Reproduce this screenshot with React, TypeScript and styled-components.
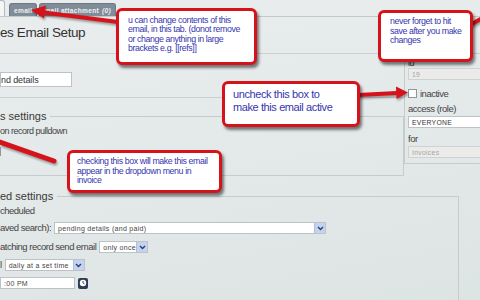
import { FC, ReactNode } from 'react';
import styled, { createGlobalStyle } from 'styled-components';

const RED = '#d6131b';
const INK = '#3636ae';

const GlobalStyle = createGlobalStyle`
  html, body {
    margin: 0;
    padding: 0;
  }
  body {
    background: #e4e9e9;
    font-family: "Liberation Sans", Arial, sans-serif;
  }
`;

const Page = styled.div`
  position: relative;
  width: 480px;
  height: 300px;
  overflow: hidden;
  background: linear-gradient(170deg, #e9eded 0%, #e3e8e8 55%, #dde4e4 100%);
  color: #3d3d3d;
  font-family: "Liberation Sans", Arial, sans-serif;
`;

const TabBar = styled.div`
  display: flex;
  align-items: flex-end;
  height: 16px;
  border-bottom: 1px solid #c3c9c9;
`;

const ActiveTabEdge = styled.div`
  width: 5px;
  height: 16px;
  margin-right: 4px;
  box-sizing: border-box;
  background: #f4f6f6;
  border-right: 1px solid #b3bac0;
  border-top: 1px solid #b3bac0;
  border-radius: 0 3px 0 0;
`;

const Tab = styled.div`
  display: flex;
  align-items: center;
  height: 13px;
  padding: 0 4px;
  margin-right: 2px;
  box-sizing: border-box;
  border-radius: 3px 3px 0 0;
  background: #808c98;
  border: 1px solid #6e7984;
  border-bottom: none;
  color: #eef1f4;
  font-size: 6.6px;
  font-weight: bold;
  letter-spacing: 0.3px;

  em {
    margin-left: 3px;
  }
`;

const Title = styled.h1`
  margin: 7px 0 0;
  font-size: 13.5px;
  font-weight: normal;
  line-height: 18px;
  letter-spacing: -0.4px;
  color: #333;
`;

const Rule = styled.div<{ $mt: number }>`
  margin-top: ${({ $mt }) => $mt}px;
  border-top: 1px solid #cbd0d0;
`;

const Split = styled.div`
  display: grid;
  grid-template-columns: 404px 76px;
`;

const LeftCol = styled.div`
  display: flex;
  flex-direction: column;
`;

const TextInput = styled.div<{ $w: number; $h?: number; $mt?: number }>`
  display: flex;
  align-items: center;
  width: ${({ $w }) => $w}px;
  height: ${({ $h }) => $h ?? 12}px;
  margin-top: ${({ $mt }) => $mt ?? 0}px;
  padding-left: 3px;
  box-sizing: border-box;
  background: #fff;
  border: 1px solid #bcc2c6;
  color: #444;
  font-size: 7px;
  letter-spacing: 0.3px;
  white-space: nowrap;
`;

const DetailInput = styled(TextInput)`
  padding-left: 0;
  font-size: 9px;
  letter-spacing: -0.1px;
  color: #333;
`;

const Box = styled.fieldset<{ $mt: number; $h: number; $w?: number }>`
  margin: ${({ $mt }) => $mt}px 0 0;
  padding: 0;
  width: ${({ $w }) => ($w ? `${$w}px` : 'auto')};
  height: ${({ $h }) => $h}px;
  box-sizing: border-box;
  border: 1px solid #c6cccc;
  border-left: none;
  min-width: 0;
`;

const Legend = styled.legend`
  padding: 0 4px 0 0;
  font-size: 11px;
  line-height: 12px;
  letter-spacing: 0;
  color: #3a3a3a;
`;

const Label = styled.div<{ $mt?: number; $size?: number }>`
  margin-top: ${({ $mt }) => $mt ?? 0}px;
  font-size: ${({ $size }) => $size ?? 9.5}px;
  line-height: 10px;
  letter-spacing: -0.5px;
  color: #444;
  white-space: nowrap;
`;

const Check = styled.div<{ $ml?: number }>`
  width: 9px;
  height: 9px;
  margin-left: ${({ $ml }) => $ml ?? 0}px;
  box-sizing: border-box;
  flex: none;
  background: #fff;
  border: 1px solid #8e979e;
`;

const FormRow = styled.div<{ $mt: number }>`
  display: flex;
  align-items: center;
  gap: 3px;
  margin-top: ${({ $mt }) => $mt}px;
  height: 12px;
`;

const SelectBox = styled(TextInput)`
  justify-content: space-between;
  padding-right: 0;
`;

const ArrowKey = styled.div`
  display: flex;
  align-items: center;
  justify-content: center;
  width: 10px;
  height: 10px;
  background: #c6d3ee;
  border-left: 1px solid #aebde0;
`;

const ClockKey = styled.div`
  display: flex;
  align-items: center;
  justify-content: center;
  width: 10px;
  height: 11px;
  border-radius: 2px;
  background: #2d3b55;
`;

const SidePanel = styled.div`
  display: flex;
  flex-direction: column;
  margin-top: 4px;
  padding: 0 0 5px 3px;
  align-self: start;
  border-left: 1px solid #c6cccc;
  border-bottom: 1px solid #c6cccc;
`;

const SideInput = styled(TextInput)<{ $off?: boolean }>`
  width: 80px;
  font-size: 6.8px;
  background: ${({ $off }) => ($off ? '#ebebea' : '#fff')};
  color: ${({ $off }) => ($off ? '#a5a5a5' : '#333')};
  border-color: ${({ $off }) => ($off ? '#cfd2d2' : '#bcc2c6')};
`;

const CheckRow = styled.div`
  display: flex;
  align-items: center;
  gap: 3px;
  margin-top: 8px;
  height: 11px;
`;

const Callout = styled.div<{ $x: number; $y: number; $w: number; $h: number; $pad: string; $size: number; $lh: number }>`
  position: absolute;
  left: ${({ $x }) => $x}px;
  top: ${({ $y }) => $y}px;
  width: ${({ $w }) => $w}px;
  height: ${({ $h }) => $h}px;
  padding: ${({ $pad }) => $pad};
  box-sizing: border-box;
  background: #fff;
  border: 3px solid ${RED};
  border-radius: 6px;
  box-shadow: 2px 3px 3px rgba(0, 0, 0, 0.5);
  color: ${INK};
  font-size: ${({ $size }) => $size}px;
  line-height: ${({ $lh }) => $lh}px;
  letter-spacing: -0.4px;
  white-space: nowrap;
`;

const Arrows = styled.svg`
  position: absolute;
  left: 0;
  top: 0;
  pointer-events: none;
  filter: drop-shadow(1px 2px 1px rgba(0, 0, 0, 0.35));
`;

const Chevron = () => (
  <svg width="7" height="5" viewBox="0 0 7 5">
    <path d="M1 1 L3.5 3.6 L6 1" fill="none" stroke="#28407a" strokeWidth="1.4" />
  </svg>
);

const Select: FC<{ w: number; children: ReactNode }> = ({ w, children }) => (
  <SelectBox $w={w}>
    {children}
    <ArrowKey>
      <Chevron />
    </ArrowKey>
  </SelectBox>
);

const App = () => (
  <Page>
    <GlobalStyle />
    <TabBar>
      <ActiveTabEdge />
      <Tab>email</Tab>
      <Tab>
        mail attachment<em>(0)</em>
      </Tab>
    </TabBar>
    <Title>es Email Setup</Title>
    <Rule $mt={11} />

    <Split>
      <LeftCol>
        <DetailInput $w={72} $h={15} $mt={18}>
          nd details
        </DetailInput>
        <Rule $mt={10} />
        <Box $mt={12} $h={66}>
          <Legend>s settings</Legend>
          <Label $mt={4} $size={9}>
            on record pulldown
          </Label>
          <FormRow $mt={9}>
            <Check $ml={-8} />
          </FormRow>
        </Box>
      </LeftCol>

      <SidePanel>
        <Label $size={9}>id</Label>
        <SideInput $off $mt={0}>
          19
        </SideInput>
        <CheckRow>
          <Check />
          <Label>inactive</Label>
        </CheckRow>
        <Label $mt={5}>access (role)</Label>
        <SideInput $mt={2}>EVERYONE</SideInput>
        <Label $mt={6}>for</Label>
        <SideInput $off $mt={2}>
          Invoices
        </SideInput>
      </SidePanel>
    </Split>

    <Box $mt={14} $h={120} $w={459}>
      <Legend>ed settings</Legend>
      <Label $mt={4}>cheduled</Label>
      <FormRow $mt={6}>
        <Label>aved search):</Label>
        <Select w={272}>pending details (and paid)</Select>
      </FormRow>
      <FormRow $mt={7}>
        <Label>atching record send email</Label>
        <Select w={49}>only once</Select>
      </FormRow>
      <FormRow $mt={6}>
        <Label>l</Label>
        <Select w={80}>daily at a set time</Select>
      </FormRow>
      <FormRow $mt={6}>
        <TextInput $w={75}>:00 PM</TextInput>
        <ClockKey>
          <svg width="8" height="8" viewBox="0 0 8 8">
            <circle cx="4" cy="4" r="3.2" fill="#fff" />
            <path d="M4 2 V4 L5.5 4.8" fill="none" stroke="#2d3b55" strokeWidth="0.9" />
          </svg>
        </ClockKey>
      </FormRow>
    </Box>

    <Arrows width="480" height="300" viewBox="0 0 480 300">
      <g fill={RED} stroke={RED} strokeLinecap="round">
        <line x1="118" y1="22" x2="44" y2="12.5" strokeWidth="4" />
        <polygon points="31,10 46,5.5 44,18.5" stroke="none" />
        <line x1="472" y1="24" x2="484" y2="17" strokeWidth="4" />
        <line x1="358" y1="95" x2="397" y2="93" strokeWidth="4" />
        <polygon points="408,92.5 396,86.5 396.5,99" stroke="none" />
        <line x1="54" y1="161" x2="-6" y2="140" strokeWidth="5" />
      </g>
    </Arrows>

    <Callout $x={116} $y={8} $w={141} $h={57} $pad="5px 0 0 9px" $size={8.8} $lh={9.3}>
      u can change contents of this
      <br />
      email, in this tab. (donot remove
      <br />
      or change anything in large
      <br />
      brackets e.g. [[refs]]
    </Callout>

    <Callout $x={378} $y={10} $w={95} $h={52} $pad="4px 0 0 9px" $size={8.8} $lh={9.5}>
      never forget to hit
      <br />
      save after you make
      <br />
      changes
    </Callout>

    <Callout $x={222} $y={81} $w={138} $h={46} $pad="4px 0 0 8px" $size={11} $lh={13}>
      uncheck this box to
      <br />
      make this email active
    </Callout>

    <Callout $x={67} $y={150} $w={155} $h={43} $pad="4px 0 0 7px" $size={8.8} $lh={9.5}>
      checking this box will make this email
      <br />
      appear in the dropdown menu in
      <br />
      invoice
    </Callout>
  </Page>
);

export default App;
